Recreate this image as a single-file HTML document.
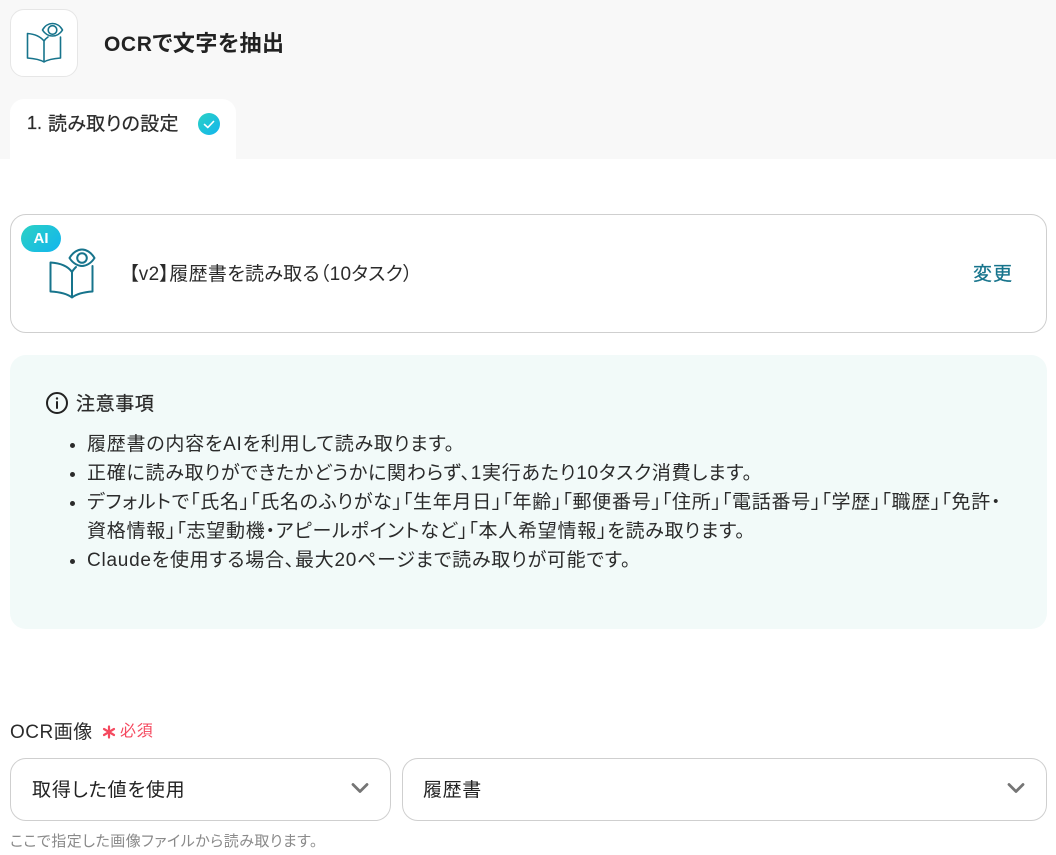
<!DOCTYPE html>
<html lang="ja"><head><meta charset="utf-8"><title>OCR</title>
<style>
html,body{margin:0;padding:0;background:#fff}
body{width:1056px;height:855px;position:relative;overflow:hidden;font-family:"Liberation Sans","Noto Sans CJK JP",sans-serif;color:#2b2b2b;font-feature-settings:"palt"}
.a{position:absolute;white-space:nowrap}
.m{-webkit-text-stroke:.25px currentColor}
ul{position:absolute;left:47px;top:430px;width:990px;margin:0;padding:0 0 0 40px;font-size:19px;line-height:29px;letter-spacing:.75px}
li{margin:0}
</style></head><body>
<div class="a" style="left:0;top:0;width:1056px;height:159px;background:#f8f8f8"></div>
<div class="a" style="left:10px;top:9px;width:66px;height:66px;background:#fff;border:1px solid #e6e6e6;border-radius:14px"></div>
<svg class="a" style="left:0;top:0" width="100" height="80" fill="none" stroke="#17748c" stroke-width="1.600" stroke-linejoin="round" stroke-linecap="round"><path d="M44 62V41C40 36 34 34 27.500 33.500V58C34 58.500 40 59.500 44 62C48 59.500 54 58.500 60.500 58V37M44 41C45 39.500 46.500 38 48 37"/><path d="M42.500 30C45 25.500 49 23.500 52.500 23.500C56 23.500 60 25.500 62.500 30C60 34 56 36 52.500 36C49 36 45 34 42.500 30Z"/><circle cx="52.500" cy="30" r="4.300"/></svg>
<div class="a" style="left:104px;top:29px;font-size:21px;line-height:30px;font-weight:700;color:#222;letter-spacing:.6px">OCR<span style="font-size:22px;letter-spacing:.5px">で文字を抽出</span></div>
<div class="a" style="left:10px;top:99px;width:226px;height:60px;background:#fff;border-radius:14px 14px 0 0"></div>
<div class="a m" style="left:27px;top:110px;font-size:18px;line-height:26px">1.</div>
<div class="a m" style="left:48px;top:112px;font-size:19px;line-height:26px;letter-spacing:.3px">読み取りの設定</div>
<div class="a" style="left:198px;top:113px;width:22px;height:22px;border-radius:50%;background:linear-gradient(135deg,#2bd1c4,#12b5ee)"></div>
<svg class="a" style="left:198px;top:113px" width="22" height="22" fill="none" stroke="#fff" stroke-width="1.600" stroke-linecap="round" stroke-linejoin="round"><path d="M6.500 11.500L9.800 14.500L15.500 8.500"/></svg>

<div class="a" style="left:10px;top:214px;width:1035px;height:117px;border:1px solid #cfcfcf;border-radius:16px"></div>
<div class="a" style="left:21px;top:225px;width:40px;height:27px;border-radius:14px;background:linear-gradient(135deg,#2bd1c4,#12b5ee);color:#fff;font-weight:700;font-size:15px;line-height:27px;text-align:center">AI</div>
<svg class="a" style="left:0;top:240px" width="110" height="65" viewBox="0 240 110 65" fill="none" stroke="#17748c" stroke-width="2" stroke-linejoin="round" stroke-linecap="round"><path d="M72 297.500V272C67 265 59 263 50.500 262.500V291.500C59 292 67 293.500 72 297.500C77 293.500 85 292 92.500 291.500V266M72 272C73 270 74.500 268.500 76 267"/><path d="M69.500 258C73 252 78 249.500 82 249.500C86 249.500 91 252 94.500 258C91 263.500 86 266 82 266C78 266 73 263.500 69.500 258Z"/><circle cx="82" cy="258" r="4.800"/></svg>
<div class="a" style="left:129px;top:262px;font-size:19px;line-height:26px;letter-spacing:.3px">【v2】履歴書を読み取る（10タスク）</div>
<div class="a m" style="left:973px;top:262px;font-size:19px;line-height:26px;letter-spacing:1px;color:#17748c">変更</div>

<div class="a" style="left:10px;top:355px;width:1037px;height:274px;border-radius:16px;background:#f2faf9"></div>
<svg class="a" style="left:45px;top:391px" width="24" height="24" fill="none" stroke="#222" stroke-width="2"><circle cx="12" cy="12" r="10"/><path d="M12 11V17" stroke-linecap="round"/><circle cx="12" cy="7.500" r="1.200" fill="#222" stroke="none"/></svg>
<div class="a m" style="left:76px;top:392px;font-size:19px;line-height:26px;letter-spacing:.6px">注意事項</div>
<ul>
<li>履歴書の内容をAIを利用して読み取ります。</li>
<li>正確に読み取りができたかどうかに関わらず、1実行あたり10タスク消費します。</li>
<li>デフォルトで「氏名」「氏名のふりがな」「生年月日」「年齢」「郵便番号」「住所」「電話番号」「学歴」「職歴」「免許・<br>資格情報」「志望動機・アピールポイントなど」「本人希望情報」を読み取ります。</li>
<li>Claudeを使用する場合、最大20ページまで読み取りが可能です。</li>
</ul>

<div class="a" style="left:10px;top:720px;font-size:19px;line-height:26px;letter-spacing:.5px">OCR画像</div>
<svg class="a" style="left:102px;top:725px" width="14" height="14" fill="none" stroke="#f5495f" stroke-width="2.200" stroke-linecap="round"><path d="M7 1.500V12.500M2 4L12 10M12 4L2 10"/></svg>
<div class="a" style="left:120px;top:721px;font-size:16px;line-height:22px;letter-spacing:.8px;color:#f5495f">必須</div>
<div class="a" style="left:10px;top:758px;width:379px;height:61px;border:1px solid #cfcfcf;border-radius:16px"></div>
<div class="a" style="left:32px;top:778px;font-size:19px;line-height:26px;letter-spacing:.85px;color:#222">取得した値を使用</div>
<svg class="a" style="left:350px;top:780px" width="20" height="16" fill="none" stroke="#757575" stroke-width="2.800" stroke-linecap="round" stroke-linejoin="round"><path d="M3 4.500L10 11.500L17 4.500"/></svg>
<div class="a" style="left:402px;top:758px;width:643px;height:61px;border:1px solid #cfcfcf;border-radius:16px"></div>
<div class="a" style="left:423px;top:778px;font-size:19px;line-height:26px;letter-spacing:.6px;color:#222">履歴書</div>
<svg class="a" style="left:1006px;top:780px" width="20" height="16" fill="none" stroke="#757575" stroke-width="2.800" stroke-linecap="round" stroke-linejoin="round"><path d="M3 4.500L10 11.500L17 4.500"/></svg>
<div class="a" style="left:10px;top:832px;font-size:15px;line-height:20px;letter-spacing:.5px;color:#8a8a8a">ここで指定した画像ファイルから読み取ります。</div>
</body></html>
